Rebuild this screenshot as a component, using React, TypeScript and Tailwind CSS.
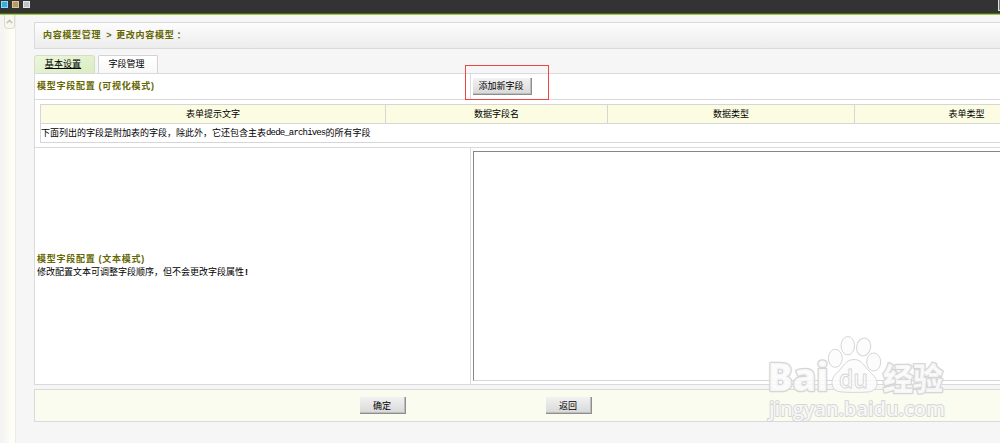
import React from 'react'
import { ChevronUp } from 'lucide-react'

const columns = [
    { label: '表单提示文字', width: 'w-[345px]' },
    { label: '数据字段名', width: 'w-[222px]' },
    { label: '数据类型', width: 'w-[247px]' },
    { label: '表单类型', width: 'w-[224px]' },
]

const FormButton: React.FC<{ className: string; children: React.ReactNode }> = ({ className, children }) => (
    <button
        className={`${className} flex h-[17px] items-center justify-center border-r border-b border-[#8f8f8f] bg-gradient-to-b from-[#f2f2f2] to-[#d8d8d8] whitespace-nowrap shadow-[inset_-1px_-1px_0_#bdbdbd]`}
    >
        {children}
    </button>
)

const TopBar = () => (
    <header className="flex h-[15px] shrink-0 justify-between border-b border-[#a5c456] bg-[#333333] shadow-[inset_0_-1px_0_#4d6a14]">
        <div className="flex gap-1 pt-px pl-px">
            <span className="h-[7px] w-[7px] border border-[#8bdcf5] bg-[#35b0dc]" />
            <span className="h-[7px] w-[7px] border border-[#d9c79c] bg-[#b79b66]" />
            <span className="h-[7px] w-[7px] border border-[#e4e6ea] bg-[#bfc3c8]" />
        </div>
        <span className="h-[11px] w-[2px] border-b border-l border-[#e0e0e0] bg-[#777]" />
    </header>
)

const ScrollTrack = () => (
    <aside className="w-4 shrink-0 border-r border-[#ebece8] bg-gradient-to-r from-[#f4f4f4] from-20% via-[#f7f5f0] via-25% to-[#fdfff7] to-80%">
        <div className="ml-[4px] flex h-[14px] w-[11px] items-center justify-center rounded-b-sm border border-t-0 border-[#dcdccf] bg-[#f7f7ee]">
            <ChevronUp className="h-[9px] w-[9px] text-[#c4c4c4]" strokeWidth={4} />
        </div>
    </aside>
)

const Watermark = () => (
    <svg
        className="pointer-events-none absolute top-[330px] left-[760px] h-[100px] w-[200px]"
        viewBox="0 0 200 100"
        fill="#fcfcfc"
        fillOpacity="0.85"
        stroke="#d6d6d6"
        strokeWidth="1"
        strokeLinejoin="round"
    >
        <g paintOrder="stroke" strokeWidth="2.6">
            <text x="7.500" y="61" fontSize="38" fontWeight="800" fontFamily="'Open Sans', sans-serif" textLength="61" lengthAdjust="spacingAndGlyphs">Bai</text>
            <text x="123" y="60" fontSize="31" fontWeight="900" fontFamily="'Noto Sans CJK SC', sans-serif" textLength="60" lengthAdjust="spacingAndGlyphs">经验</text>
        </g>
        <ellipse cx="75.300" cy="28.300" rx="7" ry="9" />
        <ellipse cx="87.800" cy="15.700" rx="6.800" ry="9.200" />
        <ellipse cx="103.600" cy="17" rx="7" ry="9" transform="rotate(12 103.6 17)" />
        <ellipse cx="113.700" cy="32" rx="7" ry="9" />
        <path d="M94 29.500C86 29.500 83.500 36 79 41C74 45 71.500 49 72 54C73 60 77 62 83 62C88 62.500 100 62.500 107 62C114 62 117 58 117 53C117 48 113 45 109 41C104 36 102 29.500 94 29.500Z" />
        <text x="79" y="58" fontSize="25" fontWeight="600" fontFamily="'Open Sans', sans-serif" textLength="29" lengthAdjust="spacingAndGlyphs">du</text>
        <text x="9" y="86" fontSize="20" fontWeight="600" fontFamily="'Open Sans', sans-serif" paintOrder="stroke" strokeWidth="1.8" textLength="176" lengthAdjust="spacingAndGlyphs">jingyan.baidu.com</text>
    </svg>
)

export default function App() {
    return (
        <div className="relative flex h-[443px] w-full flex-col overflow-hidden bg-[#f6f6f6] font-['Liberation_Sans','Noto_Sans_CJK_SC',sans-serif] text-[9px] leading-[13px] text-black">
            <TopBar />
            <div className="flex min-h-0 flex-1">
                <ScrollTrack />
                <main className="ml-[18px] flex w-[1050px] shrink-0 flex-col pt-[7px]">
                    <div className="flex h-[27px] items-center border border-[#dadada] bg-gradient-to-b from-[#fdfdfd] to-[#ececec] pl-2 font-bold tracking-[0.7px] whitespace-pre text-[#666600]">
                        <span>内容模型管理</span>
                        <span className="pr-[4px] pl-[5px]">&gt;</span>
                        <span>更改内容模型</span>
                        <span className="font-['Noto_Sans_CJK_TC',sans-serif]">：</span>
                    </div>

                    <nav className="mt-[6px] flex h-[18px] gap-[3px]">
                        <a className="flex w-[61px] items-center justify-center rounded-t-[3px] border border-b-0 border-[#d3dfc0] bg-gradient-to-br from-[#ecf6dc] to-[#daedc0] pr-[3px] tracking-[0.1px] underline">
                            基本设置
                        </a>
                        <a className="flex w-[60px] items-center justify-center rounded-t-[2px] border border-b-0 border-[#d3d3d3] bg-gradient-to-b from-white to-[#f8f8f8] pr-[3px]">
                            字段管理
                        </a>
                    </nav>

                    <section className="border border-[#dadada] bg-white">
                        <div className="flex h-[26px] border-b border-[#dadada]">
                            <div className="flex w-[436px] items-center border-r border-[#dadada] pl-[2px] font-bold tracking-[0.75px] text-[#666600]">
                                模型字段配置<span className="ml-[3px]">(可视化模式)</span>
                            </div>
                            <div className="pt-1 pl-[2px]">
                                <FormButton className="w-[59px] pr-[2px]">添加新字段</FormButton>
                            </div>
                        </div>

                        <div className="h-12 border-b border-[#dadada] pt-1 pl-[5px]">
                            <div className="h-[39px] w-[1039px] border border-[#d6d6d6]">
                                <div className="flex h-[19px] border-b border-[#d6d6d6] bg-[#fbfce2]">
                                    {columns.map((column) => (
                                        <div
                                            key={column.label}
                                            className={`${column.width} flex shrink-0 items-center justify-center border-r border-[#d6d6d6]`}
                                        >
                                            {column.label}
                                        </div>
                                    ))}
                                </div>
                                <div className="flex h-[18px] items-center">
                                    下面列出的字段是附加表的字段，除此外，它还包含主表
                                    <span className="font-['Liberation_Mono',monospace] tracking-[-0.83px]">dede_archives</span>
                                    的所有字段
                                </div>
                            </div>
                        </div>

                        <div className="flex h-[236px]">
                            <div className="flex w-[436px] flex-col justify-center border-r border-[#dadada] pl-[2px]">
                                <div className="font-bold tracking-[0.75px] text-[#666600]">
                                    模型字段配置<span className="ml-[3px]">(文本模式)</span>
                                </div>
                                <div>
                                    修改配置文本可调整字段顺序，但不会更改字段属性<b className="ml-px">!</b>
                                </div>
                            </div>
                            <div className="flex-1 pt-[3px] pl-[2px]">
                                <textarea
                                    className="block h-[230px] w-full resize-none border border-t-[#868686] border-r-[#d6d6d6] border-b-[#d6d6d6] border-l-[#868686] bg-white"
                                    aria-label="模型字段配置"
                                />
                            </div>
                        </div>
                    </section>

                    <footer className="mt-1 flex h-[33px] border border-[#dadada] bg-[#f9fcef] pt-[7px] pl-[325px]">
                        <FormButton className="w-[46px] pt-[2px] pr-px">确定</FormButton>
                        <FormButton className="ml-[140px] w-[46px] pt-[2px] pr-px">返回</FormButton>
                    </footer>
                </main>
            </div>

            {/* highlight around the add-field button */}
            <div className="absolute top-[65px] left-[465px] h-[35px] w-[84px] border border-[#f04444]" />
            <Watermark />
        </div>
    )
}
